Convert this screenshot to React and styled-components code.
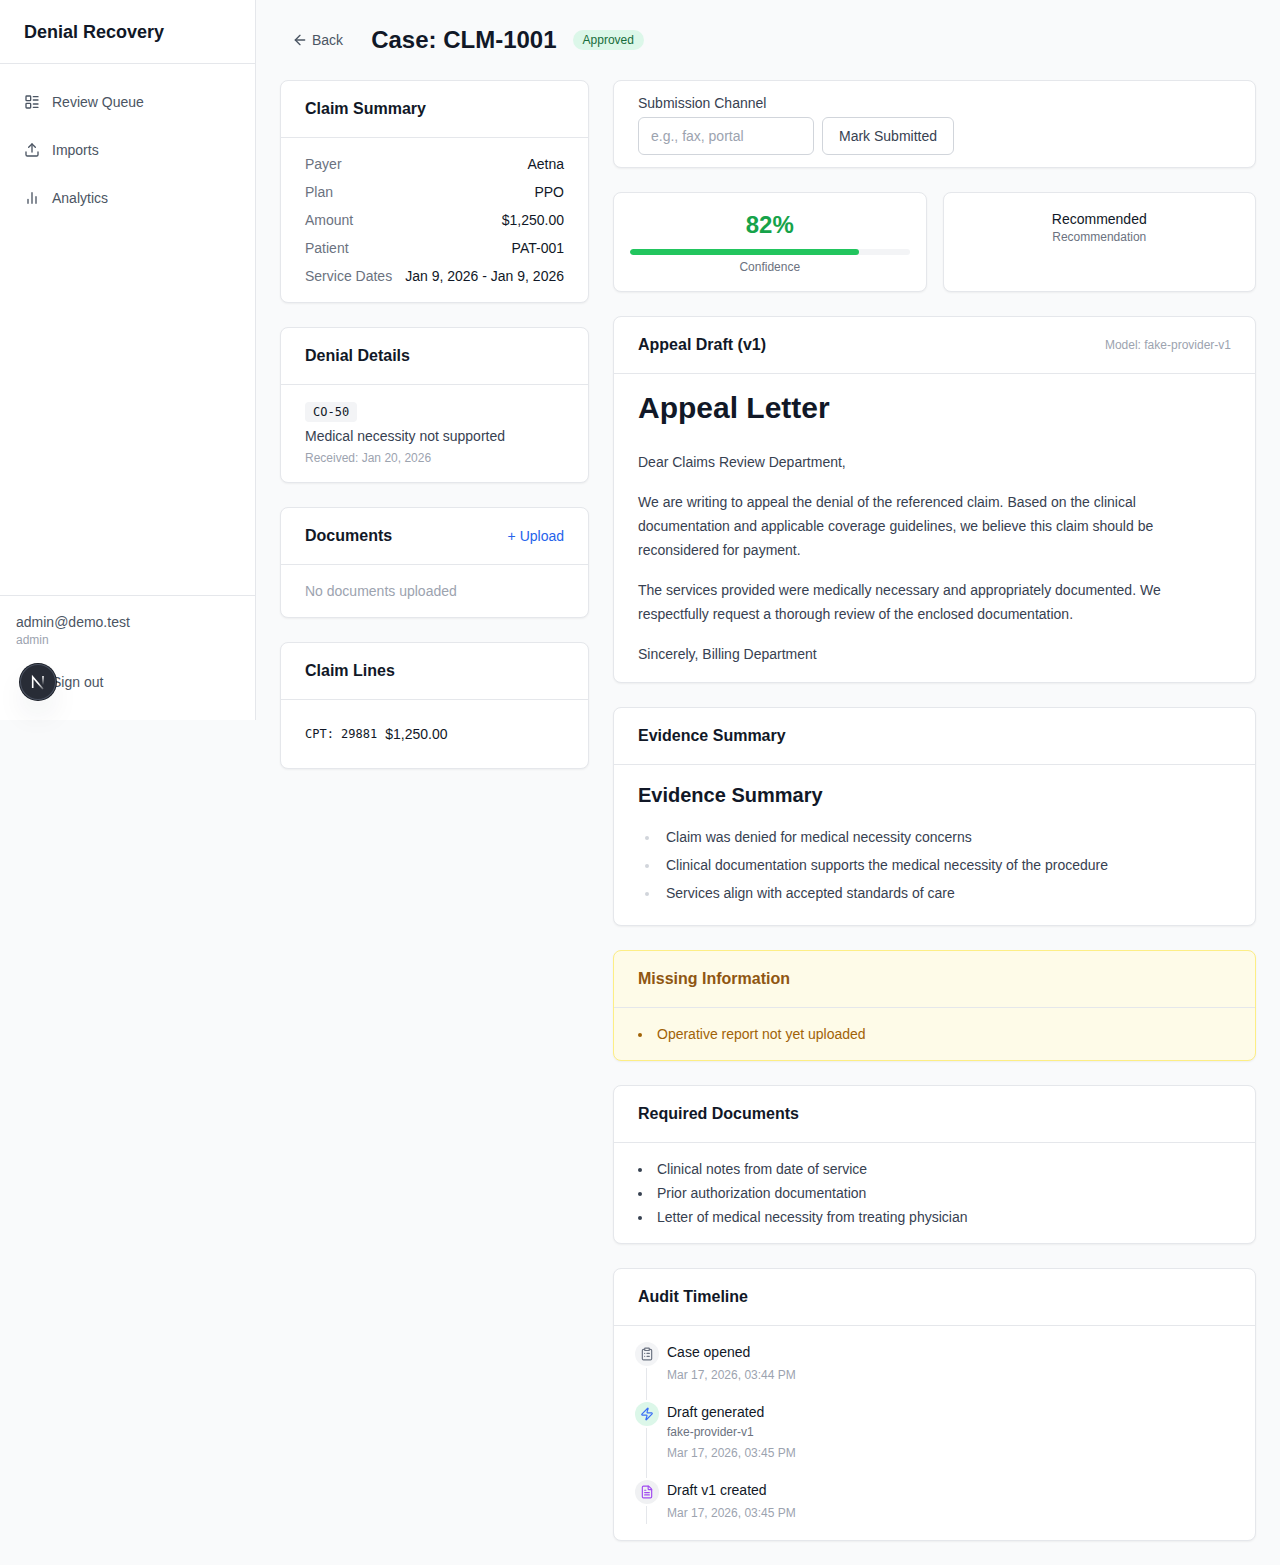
import React from "react";
import styled, { createGlobalStyle, css } from "styled-components";
import {
  LayoutList,
  Upload,
  ArrowLeft,
  ClipboardList,
  Zap,
  FileText,
  LogOut,
} from "lucide-react";

const GlobalStyle = createGlobalStyle`
  *,
  *::before,
  *::after {
    box-sizing: border-box;
    margin: 0;
    padding: 0;
  }

  body {
    background: #f9fafb;
    color: #111827;
    font-family: "Liberation Sans", Arial, sans-serif;
    font-size: 14px;
    line-height: 20px;
  }

  button,
  input {
    font: inherit;
  }
`;

const Shell = styled.div`
  display: flex;
  align-items: flex-start;
`;

const Sidebar = styled.aside`
  width: 256px;
  height: 720px;
  flex-shrink: 0;
  display: flex;
  flex-direction: column;
  background: #fff;
  border-right: 1px solid #e5e7eb;
`;

const Brand = styled.div`
  height: 64px;
  padding: 0 24px;
  display: flex;
  align-items: center;
  border-bottom: 1px solid #e5e7eb;
  font-size: 18px;
  line-height: 28px;
  font-weight: 700;
`;

const Nav = styled.nav`
  flex: 1;
  display: flex;
  flex-direction: column;
  gap: 4px;
  padding: 16px 12px;
`;

const NavLink = styled.a`
  height: 44px;
  display: flex;
  align-items: center;
  gap: 12px;
  padding: 0 12px;
  color: #4b5563;
  text-decoration: none;
`;

const Account = styled.div`
  padding: 16px;
  border-top: 1px solid #e5e7eb;
  color: #4b5563;
`;

const Role = styled.p`
  color: #9ca3af;
  font-size: 12px;
  line-height: 16px;
`;

const SignOut = styled.button`
  height: 44px;
  margin-top: 12px;
  display: flex;
  align-items: center;
  gap: 8px;
  padding: 0 12px;
  border: none;
  background: none;
  color: #4b5563;
  cursor: pointer;
`;

const DevBadge = styled.button`
  position: absolute;
  left: 20px;
  top: 664px;
  width: 36px;
  height: 36px;
  border: none;
  border-radius: 50%;
  background: #282c36;
  box-shadow:
    0 0 0 1px #171b24,
    inset 0 0 0 1px #4a5160,
    0 16px 32px -8px rgba(30, 41, 59, 0.2);
  cursor: pointer;
`;

const Main = styled.main`
  flex: 1;
  min-width: 0;
  padding: 24px;
`;

const PageHeader = styled.header`
  height: 32px;
  display: flex;
  align-items: center;
  gap: 16px;
  margin-bottom: 24px;
`;

const Back = styled.a`
  display: flex;
  align-items: center;
  gap: 4px;
  padding: 0 12px;
  color: #4b5563;
  text-decoration: none;
`;

const PageTitle = styled.h1`
  font-size: 24px;
  line-height: 32px;
`;

const Status = styled.span`
  padding: 2px 10px;
  border-radius: 10px;
  background: #dcf7e9;
  color: #166c3a;
  font-size: 12px;
  line-height: 16px;
`;

const Columns = styled.div`
  display: grid;
  grid-template-columns: minmax(0, 309fr) minmax(0, 643fr);
  align-items: start;
  gap: 24px;
`;

const Stack = styled.div`
  display: flex;
  flex-direction: column;
  gap: 24px;
`;

const CardHead = styled.div`
  height: 57px;
  display: flex;
  align-items: center;
  justify-content: space-between;
  padding: 0 24px;
  border-bottom: 1px solid #e5e7eb;
`;

const CardTitle = styled.h2`
  font-size: 16px;
  line-height: 24px;
`;

const CardBody = styled.div`
  padding: 16px 24px;
`;

const Card = styled.section`
  background: #fff;
  border: 1px solid #e5e7eb;
  border-radius: 8px;
  box-shadow: 0 1px 2px rgba(0, 0, 0, 0.05);

  ${(props) =>
    props.$warning &&
    css`
      background: #fefbe8;
      border-color: #fdee85;
      color: #8f5612;
    `}
`;

const Model = styled.span`
  color: #9ca3af;
  font-size: 12px;
  line-height: 16px;
`;

const Facts = styled.dl`
  display: flex;
  flex-direction: column;
  gap: 8px;
`;

const Fact = styled.div`
  display: flex;
  justify-content: space-between;

  dt {
    color: #6b7280;
  }
`;

const Code = styled.span`
  font-family: "DejaVu Sans Mono", monospace;
  font-size: 12px;
  line-height: 16px;
`;

const DenialCode = styled(Code)`
  padding: 2px 8px;
  border-radius: 4px;
  background: #f3f4f6;
  color: #111827;
`;

const Denial = styled.div`
  display: flex;
  flex-direction: column;
  align-items: flex-start;
  gap: 4px;
  padding-top: 1px;
  color: #374151;
`;

const Muted = styled.p`
  color: #9ca3af;
  font-size: ${(props) => (props.$small ? "12px" : "14px")};
  line-height: ${(props) => (props.$small ? "16px" : "20px")};
`;

const UploadButton = styled.button`
  border: none;
  background: none;
  color: #2563eb;
  cursor: pointer;
`;

const ClaimLine = styled.div`
  display: flex;
  align-items: center;
  gap: 8px;
  padding: 8px 0;
`;

const Submission = styled.form`
  display: flex;
  align-items: flex-end;
  gap: 8px;
  padding: 12px 24px;
`;

const Field = styled.div`
  display: flex;
  flex-direction: column;
  gap: 4px;
  color: #374151;
`;

const TextInput = styled.input`
  width: 176px;
  height: 38px;
  padding: 0 12px;
  border: 1px solid #d1d5db;
  border-radius: 6px;
  background: #fff;

  &::placeholder {
    color: #9ca3af;
  }
`;

const OutlineButton = styled.button`
  height: 38px;
  padding: 0 16px;
  border: 1px solid #d1d5db;
  border-radius: 6px;
  background: #fff;
  color: #374151;
  cursor: pointer;
`;

const Scores = styled.div`
  display: grid;
  grid-template-columns: 1fr 1fr;
  gap: 16px;
`;

const Score = styled(Card)`
  height: 100px;
  padding: 16px;
  text-align: center;
`;

const Percent = styled.p`
  color: #16a34a;
  font-size: 24px;
  line-height: 32px;
  font-weight: 700;
`;

const Meter = styled.div`
  height: 6px;
  margin: 8px 0 4px;
  border-radius: 3px;
  background: #f3f4f6;
  overflow: hidden;
`;

const MeterFill = styled.div`
  height: 6px;
  border-radius: 3px;
  background: #22c55e;
`;

const ScoreLabel = styled.p`
  color: #6b7280;
  font-size: 12px;
  line-height: 16px;
`;

const Letter = styled.article`
  max-width: 530px;
  display: flex;
  flex-direction: column;
  gap: 16px;
  color: #374151;
  line-height: 24px;

  h1 {
    margin-bottom: 8px;
    color: #111827;
    font-size: 30px;
    line-height: 36px;
  }

  h2 {
    color: #111827;
    font-size: 20px;
    line-height: 28px;
  }
`;

const EvidenceList = styled.ul`
  display: flex;
  flex-direction: column;
  gap: 4px;
  padding: 0 0 4px 22px;

  li {
    padding-left: 6px;
  }

  li::marker {
    color: #d1d5db;
  }
`;

const BulletList = styled.ul`
  display: flex;
  flex-direction: column;
  gap: 4px;
  list-style-position: inside;
  color: ${(props) => (props.$warning ? "#a16207" : "#374151")};
`;

const Timeline = styled.ol`
  display: flex;
  flex-direction: column;
  gap: 2px;
  padding: 16px 21px;
  list-style: none;
`;

const TimelineItem = styled.li`
  display: flex;
  gap: 8px;
`;

const Rail = styled.div`
  width: 24px;
  display: flex;
  flex-direction: column;
  gap: 2px;
`;

const Dot = styled.span`
  width: 24px;
  height: 24px;
  display: flex;
  align-items: center;
  justify-content: center;
  border-radius: 50%;
  background: ${(props) => props.$background};
  color: ${(props) => props.$color};
`;

const Line = styled.span`
  width: 1px;
  flex: 1;
  margin-left: 11px;
  background: #e5e7eb;
`;

const Event = styled.div`
  padding-bottom: ${(props) => (props.$last ? "2px" : "16px")};

  time {
    display: block;
    margin-top: 4px;
    color: #9ca3af;
    font-size: 12px;
    line-height: 18px;
  }
`;

const EventDetail = styled.p`
  margin-top: 2px;
  color: #6b7280;
  font-size: 12px;
  line-height: 16px;
`;

const BarsIcon = () => (
  <svg
    width="16"
    height="16"
    viewBox="0 0 24 24"
    fill="none"
    stroke="currentColor"
    strokeWidth="2"
    strokeLinecap="round"
  >
    <path d="M18 20V10M12 20V4M6 20v-6" />
  </svg>
);

const NextLogo = () => (
  <svg width="36" height="36" viewBox="0 0 36 36" fill="none">
    <defs>
      <linearGradient id="diagonal" x1="19" y1="19" x2="24" y2="25" gradientUnits="userSpaceOnUse">
        <stop stopColor="#fff" />
        <stop offset="1" stopColor="#fff" stopOpacity="0.2" />
      </linearGradient>
      <linearGradient id="stem" x1="23" y1="12" x2="23" y2="21" gradientUnits="userSpaceOnUse">
        <stop stopColor="#fff" />
        <stop offset="1" stopColor="#fff" stopOpacity="0" />
      </linearGradient>
    </defs>
    <path d="M12.7 24V13l10.3 12" stroke="url(#diagonal)" strokeWidth="1.6" />
    <path d="M23 12v9" stroke="url(#stem)" strokeWidth="1.6" />
  </svg>
);

const claim = [
  ["Payer", "Aetna"],
  ["Plan", "PPO"],
  ["Amount", "$1,250.00"],
  ["Patient", "PAT-001"],
  ["Service Dates", "Jan 9, 2026 - Jan 9, 2026"],
];

const confidence = 82;

const evidence = [
  "Claim was denied for medical necessity concerns",
  "Clinical documentation supports the medical necessity of the procedure",
  "Services align with accepted standards of care",
];

const requiredDocs = [
  "Clinical notes from date of service",
  "Prior authorization documentation",
  "Letter of medical necessity from treating physician",
];

const events = [
  {
    title: "Case opened",
    time: "Mar 17, 2026, 03:44 PM",
    icon: ClipboardList,
    color: "#6b7280",
    background: "#f3f4f6",
  },
  {
    title: "Draft generated",
    detail: "fake-provider-v1",
    time: "Mar 17, 2026, 03:45 PM",
    icon: Zap,
    color: "#3b6ef6",
    background: "#dcf7e9",
  },
  {
    title: "Draft v1 created",
    time: "Mar 17, 2026, 03:45 PM",
    icon: FileText,
    color: "#a04af0",
    background: "#f0f1f3",
  },
];

const App = () => {
  return (
    <>
      <GlobalStyle />
      <Shell>
        <Sidebar>
          <Brand>Denial Recovery</Brand>
          <Nav>
            <NavLink href="#queue">
              <LayoutList size={16} />
              Review Queue
            </NavLink>
            <NavLink href="#imports">
              <Upload size={16} />
              Imports
            </NavLink>
            <NavLink href="#analytics">
              <BarsIcon />
              Analytics
            </NavLink>
          </Nav>
          <Account>
            <p>admin@demo.test</p>
            <Role>admin</Role>
            <SignOut type="button">
              <LogOut size={16} />
              Sign out
            </SignOut>
          </Account>
          <DevBadge type="button" aria-label="Open dev tools">
            <NextLogo />
          </DevBadge>
        </Sidebar>

        <Main>
          <PageHeader>
            <Back href="#queue">
              <ArrowLeft size={16} />
              Back
            </Back>
            <PageTitle>Case: CLM-1001</PageTitle>
            <Status>Approved</Status>
          </PageHeader>

          <Columns>
            <Stack>
              <Card>
                <CardHead>
                  <CardTitle>Claim Summary</CardTitle>
                </CardHead>
                <CardBody>
                  <Facts>
                    {claim.map(([label, value]) => (
                      <Fact key={label}>
                        <dt>{label}</dt>
                        <dd>{value}</dd>
                      </Fact>
                    ))}
                  </Facts>
                </CardBody>
              </Card>

              <Card>
                <CardHead>
                  <CardTitle>Denial Details</CardTitle>
                </CardHead>
                <CardBody>
                  <Denial>
                    <DenialCode>CO-50</DenialCode>
                    <p>Medical necessity not supported</p>
                    <Muted $small>Received: Jan 20, 2026</Muted>
                  </Denial>
                </CardBody>
              </Card>

              <Card>
                <CardHead>
                  <CardTitle>Documents</CardTitle>
                  <UploadButton type="button">+ Upload</UploadButton>
                </CardHead>
                <CardBody>
                  <Muted>No documents uploaded</Muted>
                </CardBody>
              </Card>

              <Card>
                <CardHead>
                  <CardTitle>Claim Lines</CardTitle>
                </CardHead>
                <CardBody>
                  <ClaimLine>
                    <Code>CPT: 29881</Code>
                    <span>$1,250.00</span>
                  </ClaimLine>
                </CardBody>
              </Card>
            </Stack>

            <Stack>
              <Card>
                <Submission>
                  <Field>
                    <label htmlFor="channel">Submission Channel</label>
                    <TextInput id="channel" type="text" placeholder="e.g., fax, portal" />
                  </Field>
                  <OutlineButton type="button">Mark Submitted</OutlineButton>
                </Submission>
              </Card>

              <Scores>
                <Score>
                  <Percent>{confidence}%</Percent>
                  <Meter>
                    <MeterFill style={{ width: `${confidence}%` }} />
                  </Meter>
                  <ScoreLabel>Confidence</ScoreLabel>
                </Score>
                <Score>
                  <p>Recommended</p>
                  <ScoreLabel>Recommendation</ScoreLabel>
                </Score>
              </Scores>

              <Card>
                <CardHead>
                  <CardTitle>Appeal Draft (v1)</CardTitle>
                  <Model>Model: fake-provider-v1</Model>
                </CardHead>
                <CardBody>
                  <Letter>
                    <h1>Appeal Letter</h1>
                    <p>Dear Claims Review Department,</p>
                    <p>
                      We are writing to appeal the denial of the referenced
                      claim. Based on the clinical documentation and applicable
                      coverage guidelines, we believe this claim should be
                      reconsidered for payment.
                    </p>
                    <p>
                      The services provided were medically necessary and
                      appropriately documented. We respectfully request a
                      thorough review of the enclosed documentation.
                    </p>
                    <p>Sincerely, Billing Department</p>
                  </Letter>
                </CardBody>
              </Card>

              <Card>
                <CardHead>
                  <CardTitle>Evidence Summary</CardTitle>
                </CardHead>
                <CardBody>
                  <Letter>
                    <h2>Evidence Summary</h2>
                    <EvidenceList>
                      {evidence.map((item) => (
                        <li key={item}>{item}</li>
                      ))}
                    </EvidenceList>
                  </Letter>
                </CardBody>
              </Card>

              <Card $warning>
                <CardHead>
                  <CardTitle>Missing Information</CardTitle>
                </CardHead>
                <CardBody>
                  <BulletList $warning>
                    <li>Operative report not yet uploaded</li>
                  </BulletList>
                </CardBody>
              </Card>

              <Card>
                <CardHead>
                  <CardTitle>Required Documents</CardTitle>
                </CardHead>
                <CardBody>
                  <BulletList>
                    {requiredDocs.map((doc) => (
                      <li key={doc}>{doc}</li>
                    ))}
                  </BulletList>
                </CardBody>
              </Card>

              <Card>
                <CardHead>
                  <CardTitle>Audit Timeline</CardTitle>
                </CardHead>
                <Timeline>
                  {events.map(({ icon: Icon, ...event }, index) => (
                    <TimelineItem key={event.title}>
                      <Rail>
                        <Dot $background={event.background} $color={event.color}>
                          <Icon size={14} />
                        </Dot>
                        <Line />
                      </Rail>
                      <Event $last={index === events.length - 1}>
                        <p>{event.title}</p>
                        {event.detail && <EventDetail>{event.detail}</EventDetail>}
                        <time>{event.time}</time>
                      </Event>
                    </TimelineItem>
                  ))}
                </Timeline>
              </Card>
            </Stack>
          </Columns>
        </Main>
      </Shell>
    </>
  );
};

export default App;
